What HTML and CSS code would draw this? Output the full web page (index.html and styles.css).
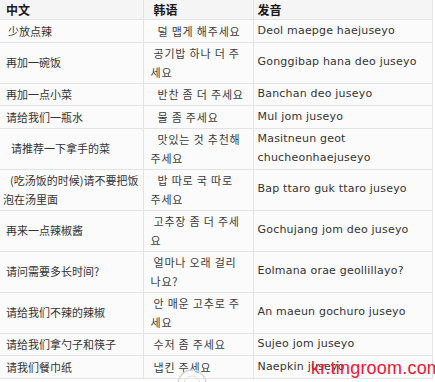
FILE: index.html
```html
<!DOCTYPE html>
<html lang="zh">
<head>
<meta charset="utf-8">
<link rel="stylesheet" href="styles.css">
</head>
<body>
<div class="page">
<table class="phrases">
<colgroup><col class="c-zh"><col class="c-ko"><col class="c-ro"></colgroup>
<thead>
<tr><th>中文</th><th class="ko-h">韩语</th><th class="ro-h">发音</th></tr>
</thead>
<tbody>
<tr><td class="zh i1">少放点辣</td><td class="ko i2">덜 맵게 해주세요</td><td class="ro">Deol maepge haejuseyo</td></tr>
<tr><td class="zh">再加一碗饭</td><td class="ko i1">공기밥 하나 더 주세요</td><td class="ro">Gonggibap hana deo juseyo</td></tr>
<tr><td class="zh">再加一点小菜</td><td class="ko i2">반찬 좀 더 주세요</td><td class="ro">Banchan deo juseyo</td></tr>
<tr><td class="zh">请给我们一瓶水</td><td class="ko i2">물 좀 주세요</td><td class="ro">Mul jom juseyo</td></tr>
<tr><td class="zh i2">请推荐一下拿手的菜</td><td class="ko i2">맛있는 것 추천해 주세요</td><td class="ro">Masitneun geot chucheonhaejuseyo</td></tr>
<tr><td class="zh tight">(吃汤饭的时候)请不要把饭泡在汤里面</td><td class="ko i2">밥 따로 국 따로 주세요</td><td class="ro">Bap ttaro guk ttaro juseyo</td></tr>
<tr><td class="zh">再来一点辣椒酱</td><td class="ko i1">고추장 좀 더 주세요</td><td class="ro">Gochujang jom deo juseyo</td></tr>
<tr><td class="zh">请问需要多长时间?</td><td class="ko i1">얼마나 오래 걸리나요?</td><td class="ro">Eolmana orae geollillayo?</td></tr>
<tr><td class="zh">请给我们不辣的辣椒</td><td class="ko i1">안 매운 고추로 주세요</td><td class="ro">An maeun gochuro juseyo</td></tr>
<tr><td class="zh">请给我们拿勺子和筷子</td><td class="ko i1">수저 좀 주세요</td><td class="ro">Sujeo jom juseyo</td></tr>
<tr><td class="zh">请我们餐巾纸</td><td class="ko i1">냅킨 주세요</td><td class="ro">Naepkin juseyo</td></tr>
</tbody>
</table>
<svg class="logo" width="40" height="20" viewBox="0 0 40 20" aria-hidden="true">
  <circle cx="20" cy="20" r="14" fill="none" stroke="#d6d6d6" stroke-width="1.5"/>
  <circle cx="20" cy="20" r="8" fill="none" stroke="#e2e2e2" stroke-width="1.2"/>
</svg>
<div class="mark">kr.tingroom.com</div>
</div>
</body>
</html>
```
FILE: styles.css
```css
html, body {
  margin: 0;
  padding: 0;
  background: #ffffff;
}
.page {
  position: relative;
  width: 435px;
  height: 382px;
  overflow: hidden;
}
.phrases {
  border-collapse: collapse;
  table-layout: fixed;
  width: 432px;
  font-size: 11px;
  color: #333333;
  background: #fbfbfb;
}
.c-zh { width: 143px; }
.c-ko { width: 110px; }
.c-ro { width: 179px; }
.phrases th {
  text-align: left;
  font-weight: bold;
  font-family: "Noto Sans CJK SC", sans-serif;
  font-size: 12px;
  line-height: 19px;
  padding: 0 6px;
  background: #f6f5f5;
  border-right: 1px solid #e3e3e3;
  border-bottom: 1px solid #e3e3e3;
  color: #1a1a1a;
}
.phrases th.ko-h { padding-left: 10px; }
.phrases th.ro-h { padding-left: 4px; }
.phrases td {
  line-height: 18.5px;
  padding: 1.5px 4px 1.5px 6px;
  border-right: 1px solid #e3e3e3;
  border-bottom: 1px solid #e3e3e3;
  vertical-align: middle;
}
.phrases td.zh {
  font-family: "Noto Sans CJK SC", sans-serif;
  font-size: 11px;
  word-break: break-all;
}
.phrases td.zh.tight {
  padding-left: 3px;
  text-indent: 7px;
}
.phrases td.ko {
  font-family: "Noto Sans CJK KR", sans-serif;
  font-size: 11px;
  letter-spacing: 0.8px;
  padding-left: 7px;
  padding-right: 7.5px;
  color: #3a3a3a;
}
.phrases td.i1 { text-indent: 3px; }
.phrases td.i2 { text-indent: 7px; }
.phrases td.zh.i1 { text-indent: 2px; }
.phrases td.zh.i2 { text-indent: 5px; }
.phrases td.ro {
  font-family: "DejaVu Sans", sans-serif;
  font-size: 11px;
  letter-spacing: 0.2px;
  padding-left: 4px;
}
.logo {
  position: absolute;
  left: 172px;
  top: 364px;
}
.mark {
  position: absolute;
  left: 311px;
  top: 358px;
  font-family: "Liberation Sans", sans-serif;
  font-size: 18px;
  color: #ee1630;
  letter-spacing: 0.2px;
}
```
